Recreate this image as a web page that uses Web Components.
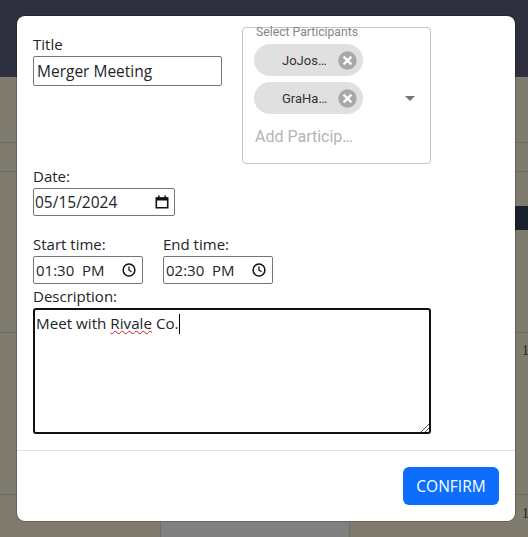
<!DOCTYPE html>
<html>
<head>
<meta charset="utf-8">
<title>Merger Meeting</title>
<style>
  html, body { margin: 0; height: 100%; overflow: hidden; }
  body { font-family: "Open Sans", "Liberation Sans", sans-serif; }
</style>
</head>
<body>
<app-backdrop></app-backdrop>
<event-modal>
  <form-field slot="left" label="Title" gap="2">
    <text-box width="189" height="30" size="15.5" pad="3">Merger Meeting</text-box>
  </form-field>
  <participant-select slot="right">
    <participant-chip>JoJos…</participant-chip>
    <participant-chip>GraHa…</participant-chip>
  </participant-select>
</event-modal>

<script>
const calendarIcon = `<svg width="14" height="14" viewBox="0 0 14 14"><path fill="none" stroke="#111" stroke-width="1.6" d="M1.3 3h11.4v9.7H1.3z"/><path fill="#111" d="M1 2.5h12v3H1zM3 .6h1.6v2H3zM9.4.6H11v2H9.4z"/></svg>`;
const clockIcon = `<svg width="14" height="14" viewBox="0 0 14 14"><circle cx="7" cy="7" r="5.9" fill="none" stroke="#111" stroke-width="1.5"/><path fill="none" stroke="#111" stroke-width="1.3" d="M7 3.4V7.2l2.6 1.6"/></svg>`;

class AppBackdrop extends HTMLElement {
    constructor() {
        super();
        this.attachShadow({mode: 'open'});
        this.shadowRoot.innerHTML = `
      <style>
      :host { display: flex; flex-direction: column; position: absolute; inset: 0; overflow: hidden; background: #7f7b6e; }
      .top { height: 77px; background: #2e303f; }
      .line { position: absolute; left: 0; right: 0; height: 1px; background: #6f6c62; }
      .band { position: absolute; left: 515px; right: 0; top: 206px; height: 24px; background: #1a2230; }
      .block { position: absolute; left: 160px; width: 190px; top: 521px; bottom: 0; background: #808080; border: solid #6f6c62; border-width: 0 1px; box-sizing: border-box; }
      .num { position: absolute; left: 522px; font: 14px/16px "Liberation Serif", serif; color: #26241f; }
      </style>
      <div class="top"></div>
      <div class="line" style="top:142px"></div>
      <div class="line" style="top:171px"></div>
      <div class="band"></div>
      <div class="line" style="top:332px"></div>
      <div class="line" style="top:494px"></div>
      <div class="block"></div>
      <span class="num" style="top:343px">1</span>
      <span class="num" style="top:506px">1</span>
    `;
    }
}

class FormField extends HTMLElement {
    constructor() {
        super();
        this.attachShadow({mode: 'open'});
    }
    connectedCallback() {
        this.shadowRoot.innerHTML = `
      <style>
      :host { display: block; color: #212529; font-size: 15px; line-height: 20px; }
      .label { display: block; margin-bottom: ${this.getAttribute('gap') || 2}px; }
      </style>
      <span class="label">${this.getAttribute('label')}</span>
      <slot></slot>
    `;
    }
}

class TextBox extends HTMLElement {
    constructor() {
        super();
        this.attachShadow({mode: 'open'});
    }
    connectedCallback() {
        const w = this.getAttribute('width');
        const h = this.getAttribute('height');
        const size = this.getAttribute('size') || 15;
        const pad = this.getAttribute('pad') || 2;
        const kind = this.getAttribute('icon');
        const icon = kind ? (kind === 'date' ? calendarIcon : clockIcon) : '';
        this.shadowRoot.innerHTML = `
      <style>
      :host {
        display: flex; align-items: center; justify-content: space-between;
        box-sizing: border-box; width: ${w}px; height: ${h}px;
        border: 1px solid #767676; border-radius: 2px; background: #fff;
        padding: 0 ${kind === 'date' ? 5 : 6}px 0 ${pad}px; color: #212529;
        font-size: ${size}px;
      }
      .value { white-space: pre; }
      svg { display: block; }
      </style>
      <span class="value"><slot></slot></span>
      ${icon}
    `;
    }
}

class ParticipantChip extends HTMLElement {
    constructor() {
        super();
        this.attachShadow({mode: 'open'});
        this.shadowRoot.innerHTML = `
      <style>
      :host {
        display: flex; align-items: center; box-sizing: border-box;
        width: 109px; height: 32px; border-radius: 16px; background: #e0e0e0;
        padding: 0 6px 0 28px; color: #333;
        font: 13px Roboto, sans-serif;
      }
      .name { flex: 1; }
      svg { display: block; }
      </style>
      <span class="name"><slot></slot></span>
      <svg width="19" height="19" viewBox="0 0 19 19"><circle cx="9.5" cy="9.5" r="9.2" fill="#a8a8a8"/><path stroke="#fff" stroke-width="2.3" d="M5.6 5.6l7.8 7.8M13.4 5.6l-7.8 7.8"/></svg>
    `;
    }
}

class ParticipantSelect extends HTMLElement {
    constructor() {
        super();
        this.attachShadow({mode: 'open'});
        this.shadowRoot.innerHTML = `
      <style>
      :host {
        display: flex; flex-direction: column; gap: 6px; position: relative;
        box-sizing: border-box; width: 189px; height: 137px;
        border: 1px solid #c4c4c4; border-radius: 4px;
        padding: 16px 11px 0;
        font-family: Roboto, sans-serif;
      }
      .legend { position: absolute; left: 13px; top: -3px; font-size: 12.2px; line-height: 14px; color: #858585; white-space: nowrap; }
      .placeholder { margin-top: 7px; padding-left: 1px; font-size: 16px; line-height: 19px; color: #b4b4b4; }
      .arrow { position: absolute; left: 162px; top: 68px; width: 0; height: 0; border: 5px solid transparent; border-top-color: #757575; border-bottom: 0; }
      </style>
      <span class="legend">Select Participants</span>
      <slot></slot>
      <span class="placeholder">Add Particip…</span>
      <span class="arrow"></span>
    `;
    }
}

class ConfirmButton extends HTMLElement {
    constructor() {
        super();
        this.attachShadow({mode: 'open'});
        this.shadowRoot.innerHTML = `
      <style>
      :host {
        display: flex; align-items: center; justify-content: center;
        width: 96px; height: 38px; border-radius: 6px;
        background: #0d6efd; color: #fff; font-size: 15.5px;
      }
      </style>
      <slot></slot>
    `;
    }
}

class EventModal extends HTMLElement {
    constructor() {
        super();
        this.attachShadow({mode: 'open'});
        this.shadowRoot.innerHTML = `
      <style>
      :host {
        display: flex; flex-direction: column; position: absolute;
        left: 17px; top: 16px; width: 498px; height: 505px; box-sizing: border-box;
        background: #fff; border-radius: 8px; font-size: 15px;
        box-shadow: 0 0 0 1px rgba(0, 0, 0, 0.2);
      }
      .body { height: 434px; box-sizing: border-box; padding: 11px 16px 0; display: flex; flex-direction: column; }
      .head { display: flex; gap: 20px; align-items: flex-start; }
      .left { padding-top: 7px; }
      .date { margin-top: 2px; }
      .times { display: flex; gap: 20px; margin-top: 18px; }
      .desc { margin-top: 2px; }
      .area {
        position: relative; box-sizing: border-box; width: 398px; height: 126px;
        border: 2px solid #111; border-radius: 3px; padding: 2px 1px;
        color: #212529; font-size: 15.2px; line-height: 22px; white-space: pre;
      }
      .typo { text-decoration: underline wavy #e5141f 1px; text-underline-offset: 1px; }
      .caret { display: inline-block; width: 1px; height: 20px; background: #000; vertical-align: -5px; }
      .grip { position: absolute; right: 0; bottom: 0; display: block; }
      .foot { flex: 1; box-sizing: border-box; border-top: 1px solid #dee2e6; display: flex; justify-content: flex-end; padding: 16px 16px 0; }
      </style>
      <div class="body">
        <div class="head">
          <div class="left"><slot name="left"></slot></div>
          <slot name="right"></slot>
        </div>
        <form-field class="date" label="Date:" gap="2">
          <text-box width="142" height="28" size="15.5" icon="date" pad="1">05/15/2024</text-box>
        </form-field>
        <div class="times">
          <form-field label="Start time:" gap="2">
            <text-box width="110" height="28" icon="time">01:30  PM</text-box>
          </form-field>
          <form-field label="End time:" gap="2">
            <text-box width="110" height="28" icon="time">02:30  PM</text-box>
          </form-field>
        </div>
        <form-field class="desc" label="Description:" gap="2">
          <div class="area">Meet with <span class="typo">Rivale</span> Co.<span class="caret"></span><svg class="grip" width="9" height="9" viewBox="0 0 9 9"><path stroke="#555" stroke-width="1" d="M1 9l8-8M5 9l4-4"/></svg></div>
        </form-field>
      </div>
      <div class="foot"><confirm-button>CONFIRM</confirm-button></div>
    `;
    }
}

customElements.define('app-backdrop', AppBackdrop);
customElements.define('form-field', FormField);
customElements.define('text-box', TextBox);
customElements.define('participant-chip', ParticipantChip);
customElements.define('participant-select', ParticipantSelect);
customElements.define('confirm-button', ConfirmButton);
customElements.define('event-modal', EventModal);
</script>
</body>
</html>
